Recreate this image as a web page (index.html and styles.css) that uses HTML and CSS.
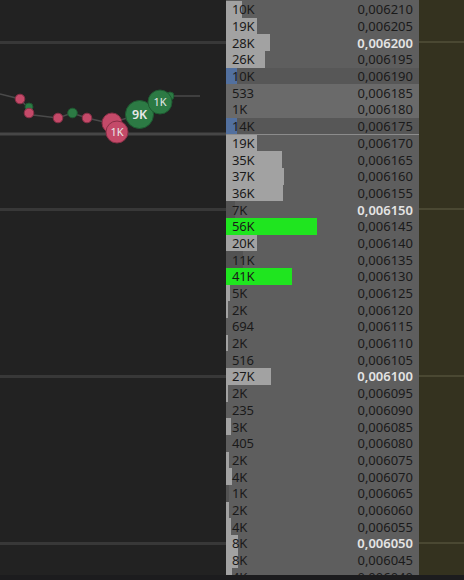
FILE: index.html
```html
<!DOCTYPE html>
<html>
<head>
<meta charset="utf-8">
<link rel="stylesheet" href="styles.css">
</head>
<body>
<div class="screen">
  <div class="chart">
    <svg class="chart-svg" width="226" height="575" viewBox="0 0 226 575">
      <g class="grid">
        <line x1="0" y1="42.5" x2="226" y2="42.5"/>
        <line x1="0" y1="209.5" x2="226" y2="209.5"/>
        <line x1="0" y1="376.5" x2="226" y2="376.5"/>
        <line x1="0" y1="543.5" x2="226" y2="543.5"/>
      </g>
      <line class="last" x1="0" y1="134" x2="226" y2="134"/>
      <polyline class="trace" points="0,94 20,99 29,109 33,115 58,118 72,113 87,118 100,121 112,123 139,114 160,102 170,96 200,96"/>
      <circle class="g" cx="29" cy="107" r="4"/>
      <circle class="r" cx="20" cy="99" r="4.8"/>
      <circle class="r" cx="29" cy="113" r="4.8"/>
      <circle class="r" cx="58" cy="118" r="4.8"/>
      <circle class="g" cx="72.5" cy="113" r="4.8"/>
      <circle class="r" cx="87" cy="118" r="4.8"/>
      <circle class="r" cx="112" cy="123" r="10"/>
      <circle class="r" cx="117" cy="132" r="11"/>
      <text class="bt" x="117" y="136">1K</text>
      <circle class="g" cx="170" cy="96" r="4"/>
      <circle class="g" cx="139.5" cy="114.5" r="14"/>
      <text class="bt big" x="139.5" y="119">9K</text>
      <circle class="g" cx="160" cy="102" r="12"/>
      <text class="bt" x="160" y="106">1K</text>
    </svg>
  </div>

  <div class="ladder">
    <div class="row" style="--w:16px"><span class="vol">10K</span><span class="px">0,006210</span></div>
    <div class="row" style="--w:31px"><span class="vol">19K</span><span class="px">0,006205</span></div>
    <div class="row hi" style="--w:44px"><span class="vol">28K</span><span class="px">0,006200</span></div>
    <div class="row" style="--w:39px"><span class="vol">26K</span><span class="px">0,006195</span></div>
    <div class="row dim blue" style="--w:11px"><span class="vol">10K</span><span class="px">0,006190</span></div>
    <div class="row lit"><span class="vol">533</span><span class="px">0,006185</span></div>
    <div class="row lit"><span class="vol">1K</span><span class="px">0,006180</span></div>
    <div class="row dim blue lastrow" style="--w:11px"><span class="vol">14K</span><span class="px">0,006175</span></div>
    <div class="row" style="--w:31px"><span class="vol">19K</span><span class="px">0,006170</span></div>
    <div class="row" style="--w:56px"><span class="vol">35K</span><span class="px">0,006165</span></div>
    <div class="row" style="--w:58px"><span class="vol">37K</span><span class="px">0,006160</span></div>
    <div class="row" style="--w:57px"><span class="vol">36K</span><span class="px">0,006155</span></div>
    <div class="row hi dark" style="--w:9px"><span class="vol">7K</span><span class="px">0,006150</span></div>
    <div class="row green" style="--w:91px"><span class="vol">56K</span><span class="px">0,006145</span></div>
    <div class="row" style="--w:31px"><span class="vol">20K</span><span class="px">0,006140</span></div>
    <div class="row dark" style="--w:17px"><span class="vol">11K</span><span class="px">0,006135</span></div>
    <div class="row green" style="--w:66px"><span class="vol">41K</span><span class="px">0,006130</span></div>
    <div class="row" style="--w:4px"><span class="vol">5K</span><span class="px">0,006125</span></div>
    <div class="row" style="--w:2px"><span class="vol">2K</span><span class="px">0,006120</span></div>
    <div class="row"><span class="vol">694</span><span class="px">0,006115</span></div>
    <div class="row" style="--w:2px"><span class="vol">2K</span><span class="px">0,006110</span></div>
    <div class="row"><span class="vol">516</span><span class="px">0,006105</span></div>
    <div class="row hi" style="--w:45px"><span class="vol">27K</span><span class="px">0,006100</span></div>
    <div class="row" style="--w:2px"><span class="vol">2K</span><span class="px">0,006095</span></div>
    <div class="row"><span class="vol">235</span><span class="px">0,006090</span></div>
    <div class="row" style="--w:5px"><span class="vol">3K</span><span class="px">0,006085</span></div>
    <div class="row"><span class="vol">405</span><span class="px">0,006080</span></div>
    <div class="row" style="--w:3px"><span class="vol">2K</span><span class="px">0,006075</span></div>
    <div class="row" style="--w:6px"><span class="vol">4K</span><span class="px">0,006070</span></div>
    <div class="row dark" style="--w:3px"><span class="vol">1K</span><span class="px">0,006065</span></div>
    <div class="row" style="--w:3px"><span class="vol">2K</span><span class="px">0,006060</span></div>
    <div class="row" style="--w:5px"><span class="vol">4K</span><span class="px">0,006055</span></div>
    <div class="row hi" style="--w:12px"><span class="vol">8K</span><span class="px">0,006050</span></div>
    <div class="row" style="--w:12px"><span class="vol">8K</span><span class="px">0,006045</span></div>
    <div class="row" style="--w:6px"><span class="vol">4K</span><span class="px">0,006040</span></div>
  </div>

  <div class="side">
    <div class="srow"></div><div class="srow"></div><div class="srow line"></div><div class="srow"></div>
    <div class="srow"></div><div class="srow"></div><div class="srow"></div><div class="srow"></div>
    <div class="srow"></div><div class="srow"></div><div class="srow"></div><div class="srow"></div>
    <div class="srow line"></div><div class="srow"></div><div class="srow"></div><div class="srow"></div>
    <div class="srow"></div><div class="srow"></div><div class="srow"></div><div class="srow"></div>
    <div class="srow"></div><div class="srow"></div><div class="srow line"></div><div class="srow"></div>
    <div class="srow"></div><div class="srow"></div><div class="srow"></div><div class="srow"></div>
    <div class="srow"></div><div class="srow"></div><div class="srow"></div><div class="srow"></div>
    <div class="srow line"></div><div class="srow"></div><div class="srow"></div>
  </div>
</div>
<div class="footer"></div>
</body>
</html>
```

FILE: styles.css
```css
html, body {
  margin: 0;
  padding: 0;
}
body {
  width: 464px;
  height: 580px;
  overflow: hidden;
  background: #1c1c1e;
  font-family: "Noto Sans", "Open Sans", sans-serif;
}
.screen {
  display: flex;
  height: 575px;
  overflow: hidden;
}
.chart {
  width: 226px;
  flex: none;
  background: #222222;
}
.chart-svg {
  display: block;
}
.grid line {
  stroke: #383838;
  stroke-width: 3;
}
.last {
  stroke: #474747;
  stroke-width: 3;
}
.trace {
  fill: none;
  stroke: #4a4a4a;
  stroke-width: 1.5;
}
circle.r {
  fill: #c44a69;
  stroke: #8a2f47;
  stroke-width: 1;
}
circle.g {
  fill: #2c7a44;
  stroke: #1e5a31;
  stroke-width: 1;
}
.bt {
  fill: #e8e8e8;
  font-family: "Noto Sans", sans-serif;
  font-size: 11px;
  text-anchor: middle;
}
.bt.big {
  font-size: 12.5px;
  font-weight: 600;
}

.ladder {
  width: 193px;
  flex: none;
  padding-top: 1px;
  background: #5e5e5e;
  display: flex;
  flex-direction: column;
}
.row {
  --bar: #a2a2a2;
  --w: 0px;
  flex: none;
  height: 16.7px;
  display: flex;
  align-items: center;
  justify-content: space-between;
  padding: 0 6px;
  background-color: #5e5e5e;
  background-image: linear-gradient(to right, var(--bar) var(--w), transparent var(--w));
  font-size: 13px;
  line-height: 16px;
  color: #1a1a1a;
}
.row.dim {
  background-color: #575757;
}
.row.lit {
  background-color: #6a6a6a;
}
.row.blue {
  --bar: #52709f;
}
.row.green {
  --bar: #1fe51f;
}
.row.dark {
  --bar: #525252;
}
.row.lastrow {
  box-shadow: inset 0 -1px 0 #8c8c8c;
}
.row.hi .px {
  color: #e4e4e4;
  font-weight: 600;
}
.vol {
  letter-spacing: -0.2px;
}

.side {
  flex: 1;
  padding-top: 1px;
  background: #34321f;
  display: flex;
  flex-direction: column;
}
.srow {
  flex: none;
  height: 16.7px;
}
.srow.line {
  background: linear-gradient(to bottom, transparent 7px, #4a4832 7px, #4a4832 9px, transparent 9px);
}
.footer {
  height: 5px;
  background: #1c1c1e;
}
```
